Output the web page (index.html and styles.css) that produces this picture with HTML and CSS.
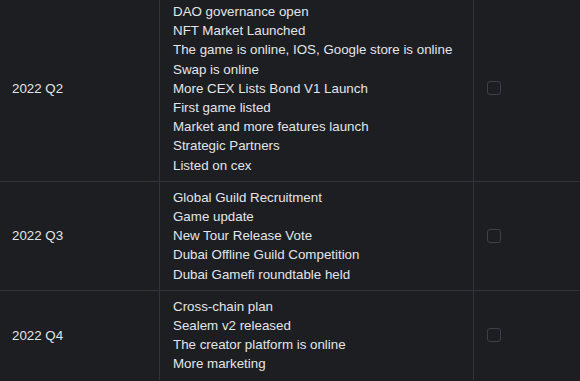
FILE: index.html
```html
<!DOCTYPE html>
<html lang="en">
<head>
<meta charset="utf-8">
<title>Roadmap</title>
<link rel="stylesheet" href="styles.css">
</head>
<body>
<div class="roadmap">
  <div class="row">
    <div class="cell period">2022 Q2</div>
    <div class="cell items">
      <div>DAO governance open</div>
      <div>NFT Market Launched</div>
      <div>The game is online, IOS, Google store is online</div>
      <div>Swap is online</div>
      <div>More CEX Lists Bond V1 Launch</div>
      <div>First game listed</div>
      <div>Market and more features launch</div>
      <div>Strategic Partners</div>
      <div>Listed on cex</div>
    </div>
    <div class="cell status"><span class="check"></span></div>
  </div>
  <div class="row">
    <div class="cell period">2022 Q3</div>
    <div class="cell items">
      <div>Global Guild Recruitment</div>
      <div>Game update</div>
      <div>New Tour Release Vote</div>
      <div>Dubai Offline Guild Competition</div>
      <div>Dubai Gamefi roundtable held</div>
    </div>
    <div class="cell status"><span class="check"></span></div>
  </div>
  <div class="row">
    <div class="cell period">2022 Q4</div>
    <div class="cell items">
      <div>Cross-chain plan</div>
      <div>Sealem v2 released</div>
      <div>The creator platform is online</div>
      <div>More marketing</div>
    </div>
    <div class="cell status"><span class="check"></span></div>
  </div>
</div>
</body>
</html>
```

FILE: styles.css
```css
html, body {
  margin: 0;
  padding: 0;
  background: #1c1e22;
}
body {
  font-family: "Liberation Sans", Arial, sans-serif;
  font-size: 13.33px;
  line-height: 19.2px;
  color: #e3e5e8;
  overflow: hidden;
}
.roadmap {
  margin-top: -5px;
  display: flex;
  flex-direction: column;
}
.row {
  display: grid;
  grid-template-columns: 160px 314px 1fr;
  border-top: 1px solid #2f333b;
}
.cell {
  box-sizing: border-box;
  padding: 6px 13px;
  border-right: 1px solid #2f333b;
}
.cell.status {
  border-right: none;
}
.period {
  display: flex;
  align-items: center;
  padding-left: 12px;
}
.status {
  display: flex;
  align-items: center;
}
.check {
  box-sizing: border-box;
  width: 14px;
  height: 14px;
  border: 1px solid #3b404b;
  border-radius: 3px;
}
```
